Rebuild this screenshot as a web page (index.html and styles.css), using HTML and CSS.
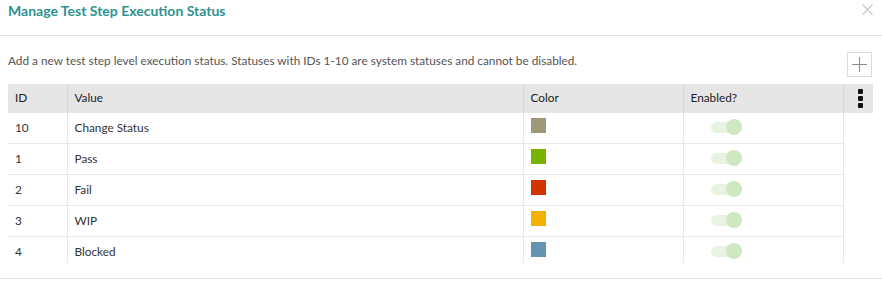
FILE: index.html
```html
<!DOCTYPE html>
<html lang="en">
<head>
  <meta charset="UTF-8">
  <title>Manage Test Step Execution Status</title>
  <link rel="stylesheet" href="styles.css">
</head>
<body>
  <div class="modal">
    <div class="modal-header">
      <h2>Manage Test Step Execution Status</h2>
      <span class="close">
        <svg width="11" height="11" viewBox="0 0 11 11"><path d="M0.5 0.5l10 10M10.5 0.5l-10 10" stroke="#c9c9c9" stroke-width="1.3"/></svg>
      </span>
    </div>

    <div class="toolbar">
      <p>Add a new test step level execution status. Statuses with IDs 1-10 are system statuses and cannot be disabled.</p>
      <button class="add-btn" type="button">
        <svg width="15" height="15" viewBox="0 0 15 15"><path d="M7.5 0v15M0 7.5h15" stroke="#8a8a8a" stroke-width="1"/></svg>
      </button>
    </div>

    <div class="grid-wrap">
      <table class="status-table">
        <colgroup>
          <col class="c-id">
          <col class="c-value">
          <col class="c-color">
          <col class="c-enabled">
          <col class="c-menu">
        </colgroup>
        <thead>
          <tr>
            <th>ID</th>
            <th>Value</th>
            <th>Color</th>
            <th>Enabled?</th>
            <th class="menu"><span class="kebab"><i></i><i></i><i></i></span></th>
          </tr>
        </thead>
        <tbody>
          <tr>
            <td>10</td>
            <td>Change Status</td>
            <td><span class="swatch" style="background:#9e9879"></span></td>
            <td><span class="toggle"></span></td>
            <td class="menu"></td>
          </tr>
          <tr>
            <td>1</td>
            <td>Pass</td>
            <td><span class="swatch" style="background:#77b300"></span></td>
            <td><span class="toggle"></span></td>
            <td class="menu"></td>
          </tr>
          <tr>
            <td>2</td>
            <td>Fail</td>
            <td><span class="swatch" style="background:#d13400"></span></td>
            <td><span class="toggle"></span></td>
            <td class="menu"></td>
          </tr>
          <tr>
            <td>3</td>
            <td>WIP</td>
            <td><span class="swatch" style="background:#f4b200"></span></td>
            <td><span class="toggle"></span></td>
            <td class="menu"></td>
          </tr>
          <tr>
            <td>4</td>
            <td>Blocked</td>
            <td><span class="swatch" style="background:#6593b2"></span></td>
            <td><span class="toggle"></span></td>
            <td class="menu"></td>
          </tr>
        </tbody>
      </table>
    </div>

    <div class="modal-footer"></div>
  </div>
</body>
</html>
```

FILE: styles.css
```css
body {
  margin: 0;
  font-family: Lato, "Open Sans", sans-serif;
  font-size: 11.8px;
  color: #333;
  background: #fff;
}

.modal {
  width: 882px;
}

.modal-header {
  height: 36px;
  box-sizing: border-box;
  display: flex;
  align-items: flex-start;
  justify-content: space-between;
  padding: 2px 9px 0 8px;
  border-bottom: 1px solid #e5e5e5;
}

.modal-header h2 {
  margin: 0;
  font-size: 14px;
  line-height: 17px;
  font-weight: 700;
  color: #2e9291;
}

.close {
  display: block;
  margin-top: 2px;
  line-height: 0;
}

.toolbar {
  display: flex;
  justify-content: space-between;
  align-items: flex-start;
  margin: 16px 10px 7px 8px;
}

.toolbar p {
  margin: 0;
  line-height: 18px;
  color: #555;
}

.add-btn {
  width: 25px;
  height: 25px;
  padding: 0;
  border: 1px solid #dcdcdc;
  background: #fff;
  display: flex;
  align-items: center;
  justify-content: center;
}

.grid-wrap {
  height: 179px;
  overflow: hidden;
  margin: 0 9px 0 8px;
}

.status-table {
  width: 865px;
  border-collapse: collapse;
  table-layout: fixed;
}

.c-id { width: 59px; }
.c-value { width: 456px; }
.c-color { width: 160px; }
.c-enabled { width: 160px; }
.c-menu { width: 30px; }

.status-table th {
  height: 27px;
  padding: 0 7px 2px;
  text-align: left;
  font-weight: 400;
  color: #222;
  background: #e6e6e6;
  border-right: 1px solid #d6d6d6;
}

.status-table th.menu {
  border-right: none;
  padding: 0;
}

.status-table td {
  height: 28px;
  padding: 0 7px 2px;
  border-bottom: 1px solid #e8e8e8;
  border-right: 1px solid #e8e8e8;
  vertical-align: middle;
}

.status-table td.menu {
  border: none;
}

.kebab {
  display: flex;
  flex-direction: column;
  gap: 2px;
  margin-left: 14px;
}

.kebab i {
  width: 5px;
  height: 5px;
  background: #111;
  border-radius: 1px;
}

.swatch {
  display: block;
  width: 15px;
  height: 15px;
  margin-top: -3px;
}

.toggle {
  display: block;
  position: relative;
  width: 26px;
  height: 11px;
  margin-left: 20px;
  border-radius: 6px;
  background: #e8f3e2;
}

.toggle::after {
  content: "";
  position: absolute;
  right: -5px;
  top: -3px;
  width: 16px;
  height: 16px;
  border-radius: 50%;
  background: #cfe8c2;
}

.modal-footer {
  margin-top: 15px;
  border-top: 1px solid #e5e5e5;
}
```
